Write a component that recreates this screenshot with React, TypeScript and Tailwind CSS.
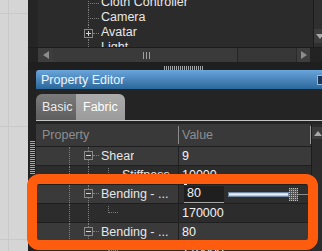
const dotV = "absolute top-0 bottom-0 border-l border-dotted border-[#7e7e7e]";

function TreeBox({ plus, bg }: { plus?: boolean; bg: string }) {
  return (
    <span className={`relative flex h-[9px] w-[9px] items-center justify-center border border-[#8a8a8a] ${bg}`}>
      <span className="h-px w-[5px] bg-[#d8d8d8]" />
      {plus && <span className="absolute h-[5px] w-px bg-[#d8d8d8]" />}
    </span>
  );
}

function TopTree() {
  const items = [
    { label: "Cloth Controller" },
    { label: "Camera" },
    { label: "Avatar", plus: true },
    { label: "Light" },
  ];
  return (
    <div className="flex-1 overflow-hidden bg-[#2b2b2b]">
      <div className="-mt-[5px]">
        {items.map((it) => (
          <div key={it.label} className="relative flex h-[15px] items-center">
            <span className={`${dotV} left-[50px]`} />
            {it.plus ? (
              <>
                <span className="absolute left-[46px] top-[4px]">
                  <TreeBox plus bg="bg-[#2b2b2b]" />
                </span>
                <span className="absolute left-[55px] top-[8px] w-[6px] border-t border-dotted border-[#7e7e7e]" />
              </>
            ) : (
              <span className="absolute left-[52px] top-[8px] w-[9px] border-t border-dotted border-[#7e7e7e]" />
            )}
            <span className="whitespace-nowrap pl-[63px] text-[#e8e8e8]">{it.label}</span>
          </div>
        ))}
      </div>
    </div>
  );
}

type RowProps = {
  name: string;
  value: string;
  parent?: boolean;
  editing?: boolean;
};

function GridRow({ name, value, parent, editing }: RowProps) {
  const bg = parent ? "bg-[#3a3a3a]" : "bg-[#2c2c2c]";
  return (
    <div className={`flex h-[19px] shrink-0 border-b border-[#1f1f1f] ${bg}`}>
      <div className="relative flex w-[143px] shrink-0 items-center border-r border-[#202020]">
        <span className={`${dotV} left-[33px]`} />
        <span className={`${dotV} left-[52px]`} />
        {parent ? (
          <>
            <span className="absolute left-[48px] top-[4px]">
              <TreeBox bg="bg-[#3a3a3a]" />
            </span>
            <span className="absolute left-[57px] top-[8px] w-[6px] border-t border-dotted border-[#7e7e7e]" />
          </>
        ) : (
          <>
            <span className="absolute left-[72px] top-[2px] h-[7px] border-l border-dotted border-[#7e7e7e]" />
            <span className="absolute left-[72px] top-[8px] w-[10px] border-t border-dotted border-[#7e7e7e]" />
          </>
        )}
        <span className={`truncate text-[#e6e6e6] ${parent ? "pl-[65px]" : "pl-[86px]"}`}>{name}</span>
      </div>
      {editing ? (
        <div className="flex flex-1 items-center bg-[#2e2e2e] pl-[5px]">
          <div className="relative flex h-[17px] w-[40px] items-center border-b border-[#a8a8a8] bg-[#1f1f1f] pl-[3px] text-[#f2f2f2]">
            <span className="absolute -top-[3px] left-0 h-[2px] w-[3px] bg-[#f0f0f0]" />
            {value}
          </div>
          <div className="ml-[4px] h-[5px] w-[61px] border border-[#6f86a0] bg-[linear-gradient(#bccde4,#eef3fa_45%,#9cb6d4)]" />
          <div className="h-[13px] w-[9px] bg-[repeating-linear-gradient(90deg,transparent_0_1px,#555555_1px_2px),repeating-linear-gradient(0deg,#bdbdbd_0_1px,#555555_1px_2px)]" />
          <div className="h-px flex-1 bg-[#8a8a8a]" />
        </div>
      ) : (
        <div className="flex flex-1 items-center pl-[3px] text-[#f2f2f2]">{value}</div>
      )}
    </div>
  );
}

export default function App() {
  const rows: RowProps[] = [
    { name: "Shear", value: "9", parent: true },
    { name: "Stiffness", value: "10000" },
    { name: "Bending - ...", value: "80", parent: true, editing: true },
    { name: "", value: "170000" },
    { name: "Bending - ...", value: "80", parent: true },
    { name: "", value: "170000" },
  ];

  return (
    <div className="relative flex h-[251px] w-[322px] overflow-hidden font-['Liberation_Sans',Arial,sans-serif] text-[12.5px]">
      {/* canvas behind the panel */}
      <div className="w-[28px] shrink-0 bg-[#d5d5d5] bg-[linear-gradient(#c9c9c9_1px,transparent_1px),linear-gradient(90deg,#c9c9c9_1px,transparent_1px)] bg-[size:113px_113px] bg-[position:8px_13px]" />

      <div className="flex min-w-0 flex-1 flex-col bg-[#232323]">
        {/* scene tree */}
        <div className="flex h-[47px] shrink-0">
          <div className="w-[10px] shrink-0 bg-[#252525]" />
          <TopTree />
          <div className="flex w-[9px] shrink-0 flex-col border-l border-[#1c1c1c] bg-[#2f2f2f]">
            <div className="mt-[29px] flex h-[14px] items-center justify-center bg-[#3c3c3c] pl-[4px]">
              <span className="h-0 w-0 border-x-[4px] border-t-[5px] border-x-transparent border-t-[#a8a8a8]" />
            </div>
          </div>
        </div>

        {/* horizontal scrollbar */}
        <div className="flex h-[15px] shrink-0 border-t border-[#1d1d1d]">
          <div className="w-[10px] shrink-0 bg-[#232323]" />
          <div className="flex w-[15px] shrink-0 items-center justify-center bg-[#3d3d3d]">
            <span className="h-0 w-0 border-y-[4px] border-r-[6px] border-y-transparent border-r-[#8c8c8c]" />
          </div>
          <div className="flex w-[185px] shrink-0 items-center justify-center border-r border-[#252525] bg-[#3a3a3a]">
            <span className="ml-[2px] h-[7px] w-[7px] bg-[repeating-linear-gradient(90deg,#a0a0a0_0_1px,transparent_1px_3px)]" />
          </div>
          <div className="flex-1 bg-[#373737]" />
          <div className="flex w-[14px] shrink-0 items-center justify-center border-l border-[#2a2a2a] bg-[#3d3d3d]">
            <span className="h-0 w-0 border-y-[4px] border-l-[6px] border-y-transparent border-l-[#8c8c8c]" />
          </div>
          <div className="w-[12px] shrink-0 bg-[#232323]" />
        </div>

        {/* splitter */}
        <div className="h-[8px] shrink-0 bg-[#1f1f1f] pl-[136px] pt-[4px]">
          <div className="h-[4px] w-[39px] bg-[repeating-linear-gradient(90deg,#a5a5a5_0_1px,transparent_1px_2px)]" />
        </div>

        {/* property editor */}
        <div className="flex min-h-0 flex-1">
          <div className="w-[8px] shrink-0 bg-[#222222] pl-[2px] pt-[71px]">
            <div className="h-[34px] w-[5px] bg-[repeating-linear-gradient(180deg,#a8a8a8_0_1px,transparent_1px_2px)]" />
          </div>

          <div className="flex min-w-0 flex-1 flex-col">
            <div className="relative h-[19px] shrink-0 rounded-tl-[3px] bg-linear-to-b from-[#6aa6dc] to-[#2a679b] pl-[5px] pt-[2px] leading-[17px] text-[#eef5fc]">
              Property Editor
              <span className="absolute left-[281px] top-[5px] h-[10px] w-[10px] border border-[#8fb8e0] bg-[#1c3658]" />
            </div>

            <div className="h-[5px] shrink-0 bg-[#242424]" />

            <div className="flex h-[26px] shrink-0 bg-[#242424]">
              <div className="flex w-[40px] items-center rounded-tl-[6px] bg-linear-to-b from-[#7b7b7b] to-[#5e5e5e] pl-[6px] text-[#ececec]">
                Basic
              </div>
              <div className="flex w-[49px] items-center rounded-tr-[6px] bg-linear-to-b from-[#ababab] to-[#9c9c9c] pl-[7px] text-white">
                Fabric
              </div>
            </div>
            <div className="h-px shrink-0 bg-[#c4c4c4]" />
            <div className="h-[3px] shrink-0 bg-[#242424]" />

            <div className="flex min-h-0 flex-1">
              <div className="flex min-w-0 flex-1 flex-col">
                <div className="flex h-[23px] shrink-0 items-center border-b border-[#1f1f1f] bg-[#393939] text-[#8e8e8e]">
                  <div className="w-[142px] shrink-0 pl-[6px]">Property</div>
                  <span className="h-[18px] w-px bg-[#8a8a8a]" />
                  <div className="flex-1 pl-[3px]">Value</div>
                  <span className="h-[18px] w-px bg-[#9a9a9a]" />
                </div>
                {rows.map((r, i) => (
                  <GridRow key={i} {...r} />
                ))}
              </div>
              <div className="flex w-[11px] shrink-0 flex-col border-l border-[#1c1c1c] bg-[#2c2c2c]">
                <div className="mt-[3px] flex h-[12px] items-center justify-center bg-[#3b3b3b] pl-[2px]">
                  <span className="h-0 w-0 border-x-[4px] border-b-[5px] border-x-transparent border-b-[#a8a8a8]" />
                </div>
              </div>
            </div>
          </div>
        </div>
      </div>

      {/* highlight around the edited rows */}
      <div className="pointer-events-none absolute left-[27px] top-[174px] h-[76px] w-[291px] rounded-[12px] border-[10px] border-[#ff5c0e]" />
    </div>
  );
}
